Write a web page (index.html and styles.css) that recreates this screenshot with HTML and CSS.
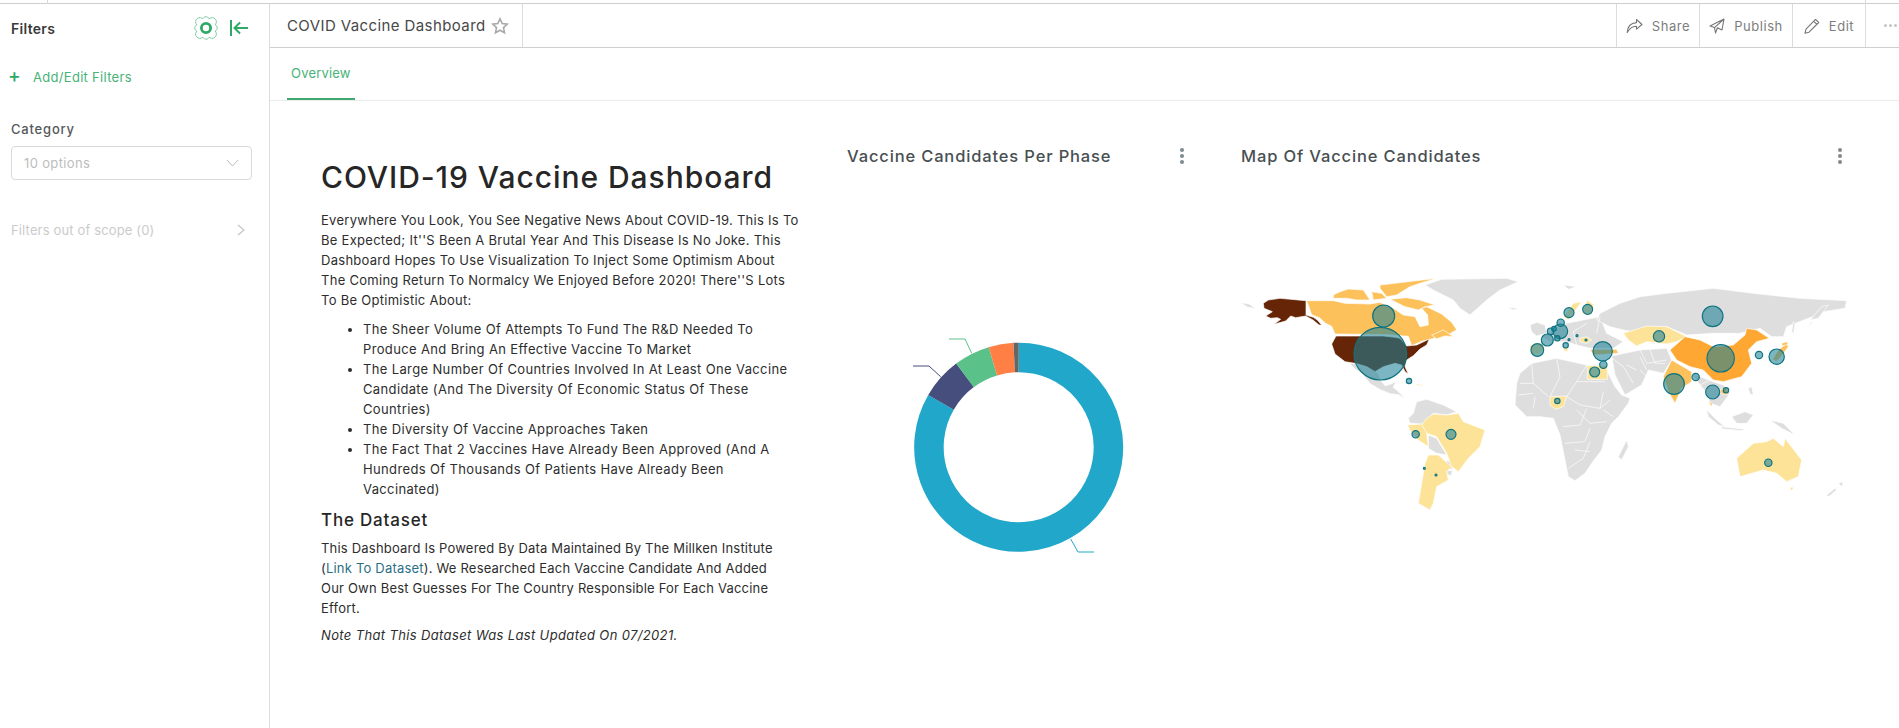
FILE: index.html
```html
<!doctype html>
<html lang="en">
    <head>
        <meta charset="utf-8">
        <title>COVID Vaccine Dashboard</title>
        <link rel="stylesheet" href="styles.css">
    </head>
    <body>
        <div class="top-strip"><span class="top-tick"></span><span class="top-tick top-tick-right"></span></div>

        <div class="layout">

            <aside class="filter-bar">
                <div class="filter-head">
                    <span class="filter-title">Filters</span>
                    <svg class="filter-gear" width="24" height="24" viewBox="0 0 24 24" fill="none" stroke="#2ea866">
                        <path stroke-width=".8" stroke-dasharray="1.3 .4" d="M15.2 2.9A3.5 3.5 0 0 1 21.1 8.8A3.5 3.5 0 0 1 21.1 15.2A3.5 3.5 0 0 1 15.2 21.1A3.5 3.5 0 0 1 8.8 21.1A3.5 3.5 0 0 1 2.9 15.2A3.5 3.5 0 0 1 2.9 8.8A3.5 3.5 0 0 1 8.8 2.9A3.5 3.5 0 0 1 15.2 2.9z"/>
                        <circle cx="12" cy="12" r="4.6" stroke-width="2.8"/>
                    </svg>
                    <svg class="filter-collapse" width="20" height="18" viewBox="0 0 20 18" fill="none" stroke="#2ea866" stroke-width="2">
                        <path d="M2 1v16"/>
                        <path d="M19 9H6M11 3.5L5.5 9l5.5 5.5"/>
                    </svg>
                </div>

                <a class="filter-add"><span class="filter-plus">+</span>Add/Edit Filters</a>

                <div class="filter-group">
                    <label class="filter-label">Category</label>
                    <div class="filter-select">
                        <span>10 options</span>
                        <svg width="13" height="8" viewBox="0 0 13 8" fill="none" stroke="#bdbdbd" stroke-width="1"><path d="M1 1l5.5 6L12 1"/></svg>
                    </div>
                </div>

                <div class="filter-scope">
                    <span>Filters out of scope (0)</span>
                    <svg width="8" height="12" viewBox="0 0 8 12" fill="none" stroke="#c4c4c4" stroke-width="1.2"><path d="M1 1l6 5-6 5"/></svg>
                </div>
            </aside>

            <main class="dash">
                <header class="dash-head">
                    <div class="dash-name">
                        <span>COVID Vaccine Dashboard</span>
                        <svg width="18" height="18" viewBox="0 0 18 18" fill="none" stroke="#a8a8a8" stroke-width="1.6"><path d="M9 1.8l2.2 4.7 5.1.6-3.8 3.5 1 5.1L9 13.2l-4.5 2.5 1-5.1-3.8-3.5 5.1-.6z"/></svg>
                    </div>
                    <div class="dash-actions">
                        <a class="action action-share">
                            <svg width="17" height="16" viewBox="0 0 17 16" fill="none" stroke="#777" stroke-width="1.1" stroke-linejoin="round"><path d="M10.5 1.5L16 6.5l-5.5 4.6V8.2C6.5 8 3.5 10 1.2 14.5 1.5 9 4.5 5 10.5 4.6z"/></svg>
                            Share
                        </a>
                        <a class="action action-publish">
                            <svg width="16" height="16" viewBox="0 0 16 16" fill="none" stroke="#777" stroke-width="1.1" stroke-linejoin="round"><path d="M15 1L1 8l4.5 1.6L15 1l-2 11-4.6-2.2L6.5 15l-1-5.4"/></svg>
                            Publish
                        </a>
                        <a class="action action-edit">
                            <svg width="16" height="16" viewBox="0 0 16 16" fill="none" stroke="#777" stroke-width="1.1" stroke-linejoin="round"><path d="M11.5 1.3l3.2 3.2L5 14.2l-4 1 1-4zM9.6 3.2l3.2 3.2"/></svg>
                            Edit
                        </a>
                        <a class="action action-more"><i></i><i></i><i></i></a>
                    </div>
                </header>

                <nav class="tabs">
                    <a class="tab active">Overview</a>
                </nav>

                <div class="dash-grid">

                    <section class="note">
                        <h1>COVID-19 Vaccine Dashboard</h1>
                        <p class="note-intro">Everywhere You Look, You See Negative News About COVID-19. This Is To<br>
                        Be Expected; It''S Been A Brutal Year And This Disease Is No Joke. This<br>
                        Dashboard Hopes To Use Visualization To Inject Some Optimism About<br>
                        The Coming Return To Normalcy We Enjoyed Before 2020! There''S Lots<br>
                        To Be Optimistic About:</p>
                        <ul>
                            <li>The Sheer Volume Of Attempts To Fund The R&amp;D Needed To<br>
                            Produce And Bring An Effective Vaccine To Market</li>
                            <li>The Large Number Of Countries Involved In At Least One Vaccine<br>
                            Candidate (And The Diversity Of Economic Status Of These<br>
                            Countries)</li>
                            <li>The Diversity Of Vaccine Approaches Taken</li>
                            <li>The Fact That 2 Vaccines Have Already Been Approved (And A<br>
                            Hundreds Of Thousands Of Patients Have Already Been<br>
                            Vaccinated)</li>
                        </ul>
                        <h2>The Dataset</h2>
                        <p class="note-data">This Dashboard Is Powered By Data Maintained By The Millken Institute<br>
                        (<a class="note-link">Link To Dataset</a>). We Researched Each Vaccine Candidate And Added<br>
                        Our Own Best Guesses For The Country Responsible For Each Vaccine<br>
                        Effort.</p>
                        <p class="note-small"><em>Note That This Dataset Was Last Updated On 07/2021.</em></p>
                    </section>

                    <section class="chart chart-donut">
                        <div class="chart-head">
                            <h3>Vaccine Candidates Per Phase</h3>
                            <span class="kebab"><i></i><i></i><i></i></span>
                        </div>
                        <svg class="donut" width="260" height="240" viewBox="880 320 260 240" fill="none" stroke-width="1">
                            <path stroke="#20a7c9" d="M1070.7 539l7.3 13h16"/>
                            <path stroke="#454e7c" d="M940.7 376.7L929 366h-16"/>
                            <path stroke="#5ac189" d="M971.7 353.3L965 339h-16"/>
                            <g stroke-width="29.5">
                                <path stroke="#20a7c9" d="M1018.7 357.5A89.75 89.75 0 1 1 941.0 402.3"/>
                                <path stroke="#454e7c" d="M941.0 402.3A89.75 89.75 0 0 1 965.0 375.3"/>
                                <path stroke="#5ac189" d="M965.0 375.3A89.75 89.75 0 0 1 992.9 361.3"/>
                                <path stroke="#ff7f44" d="M992.9 361.3A89.75 89.75 0 0 1 1014.2 357.6"/>
                                <path stroke="#666666" d="M1014.2 357.6A89.75 89.75 0 0 1 1018.7 357.5"/>
                            </g>
                        </svg>
                    </section>

                    <section class="chart chart-map">
                        <div class="chart-head">
                            <h3>Map Of Vaccine Candidates</h3>
                            <span class="kebab"><i></i><i></i><i></i></span>
                        </div>
                        <svg class="world" width="640" height="270" viewBox="0 0 1920 810">
                            <g class="land-none">
                                <!-- greenland, russia tip, iceland -->
                                <path d="M585 45l50-17 195-3 35 10-55 25-40 30-50 45-30-20-20-25-60-30z"/>
                                <path d="M32 98l25 4 20 14-25-5z"/>
                                <path d="M830 112l35 3-15 5z"/>
                                <!-- mexico and central america -->
                                <path d="M358 280l27 2 35 13 25 15 8 22 12 15 18-5 15-8-8 18 14 12 22 22-20-12-25-3-30-12-30-18-25-30-22-15z"/>
                                <!-- north of south america -->
                                <path d="M535 445l15-15 10-35 30-7 50 17 40 20-30 10-40-5-20 20-15 12-35-2z"/>
                                <path d="M595 495l25 10 30 50-30-5-25-15z"/>
                                <path d="M650 570l20 12-5 18-15-8z"/>
                                <path d="M650 602h18l-5 15-12-4z"/>
                            </g>
                            <g class="land-mid">
                                <path d="M230 92h80l35 8 75 2 30-5 20 10 20 8 30 20 35 5 15 30 25-5-2-30-18-20 15-5 45 22 30 25 15 22-25 15-40 10-40 10-30 13-10-28-60-5-160-2-10-23-20-10-15-15-25-10z"/>
                                <path d="M450 45l170-20-50 15-30 10-40 25-30 5-20-25z"/>
                                <path d="M310 75l20-10 25-8 45 3 20 30h-40l-30-5-40 0z"/>
                                <path d="M425 65l30 5 15 15-40 5z"/>
                                <path d="M480 88l50-5 40 7 45 15-30 5-20 10-40-10z"/>
                                <path d="M605 195l35-15 30 20-25-2-25 8z"/>
                            </g>
                            <g class="land-top">
                                <path d="M100 100l15-10 35-5 78 7v43l22 7 12 8 13 15-8 0-18-15-22-12-30 5-15-5-15 15-35 10 20-15-10-5-20 2-15-7 20-13-25-10z"/>
                                <path d="M318 198h142l35 4 15 3 20 23 30-3 38-18-8 18-20 12-20 20-20 13-5 20 10 22-10-7-10-20-20-5-35 10-25 15-25-15-35-10-30-5-30-23-10-30z"/>
                            </g>
                            <g class="land-low">
                                <path d="M590 445l20-13 40 3 35-5 15 25 65 25-15 50-35 35-30 40-20-15-15-40-30-50-30-10-20-20z"/>
                                <path d="M532 465l43-3 15 28 5 40-30-20-20-20z"/>
                                <path d="M595 555h30l40 35-15 15 5 25-35 20-10 50-10 20-35-20 10-60 10-60z"/>
                                <path d="M558 340l20 6 8 3-25-3z"/>
                            </g>

                            <g transform="translate(810 0)">
                                <g class="land-none">
                                    <!-- africa -->
                                    <path d="M50 340l10-30 35-30 75-15 90 20 60 15 25 50 20 25 25 10-5 15-30 40-20 20-20 40-10 40-30 40-20 30-30 22-20-12-15-75-10-50-20-50-40-5-40 0-35-35z"/>
                                    <path d="M380 510l5 20-20 40-10-10z"/>
                                    <!-- europe -->
                                    <path d="M125 200l75-40 50-10 50-10 20 50 50 25-30 20h-70l-40-10-30-10h-50z"/>
                                    <path d="M90 165l20-8 25 8 5 25-30 8-15-12z"/>
                                    <path d="M190 45l40 5-25 8z"/>
                                    <!-- russia -->
                                    <path d="M300 130l60-30 60-20 80-10 140-15 120 15 140 15 140 7-5 23-65 10-40 35-5 15 25-40-90 35-10 30h-35l-35-25-60 15h-80l-80 5-60-25-100 15-30-5-40-10-40-20z"/>
                                    <path d="M930 150l35-40 20-5-30 40z"/>
                                    <!-- middle east, central asia -->
                                    <path d="M335 258l85-18 80-5 15 35-25 40-45-10-20 45-50 30-30-60-5-30z"/>
                                    <!-- south east asia -->
                                    <path d="M575 310l65 25 30 10 20 25-30 40-30-10-10-30-20-25z"/>
                                    <path d="M620 420l30 30 25 20-20-5-30-25z"/>
                                    <path d="M665 470l70 8-10 4-60-6z"/>
                                    <path d="M695 440l40-15 25 10-20 25-30 0z"/>
                                    <path d="M810 450l40 10 35 35-40-20z"/>
                                    <path d="M745 355l10-5 5 25-10-3z"/>
                                    <!-- new zealand -->
                                    <path d="M980 675l25-20 5 5-25 20z"/>
                                    <path d="M1015 640l15-5-5 15z"/>
                                    <path d="M875 185l5-30 5 5-4 30z"/>
                                </g>
                                <g class="land-low">
                                    <path d="M370 190l70-22 60 2 60 30-30 15-30 7-60-7-30 13-25-18z"/>
                                    <path d="M262 287h60v41h-60z"/>
                                    <path d="M150 380l50-2-10 32-25 8-15-13z"/>
                                    <path d="M710 565l50-45 40-5 20-10 30 25 5-25 50 65-10 50-35 15-30-25-40-10-70 20z"/>
                                    <path d="M868 652h14l-7 10z"/>
                                    <path d="M190 140l30-40 25-5-40 55z"/>
                                    <path d="M245 130l17-40 20 15-7 30z"/>
                                    <path d="M240 205l20-5 15 10-15 10-20-5z"/>
                                    <path d="M90 225l35-5 10 15-20 20-25-5z"/>
                                    <path d="M190 230l15 5-3 10-12-5z"/>
                                </g>
                                <g class="land-mid">
                                    <path d="M270 238h80l5 12-75 5z"/>
                                    <path d="M490 320l25-50 60 35v30l-30 20-20 45-20-35z"/>
                                    <path d="M835 240l25-20 5 10-22 30-15 15-10-8z"/>
                                    <path d="M845 220l15-5 5 8-18 5z"/>
                                    <path d="M625 395l12 5-2 10z"/>
                                    <path d="M660 360l20-8 5 22-20-2z"/>
                                </g>
                                <g class="land-high">
                                    <path d="M510 240l45-40 45 10 40 20 60-5 35-30 5-20 30 5 38 25-38 10-25 25 10 40-30 40-55 15-30-5-30-30-40-10-40-20z"/>
                                </g>
                                <path class="land-lines" d="M95 280l5 60 45 40M170 265l10 55-30 60M260 285l-30 50-30 45M230 335h85M200 380l40 25 60 10 30-25M190 470l50-5 20-50M195 520l60-5 15-40M205 595l45-30 20-50M60 340h40M55 375l45-5M100 415l5-35M230 420l40 40M270 460l50-5M300 415l10-50M225 540l45 5M340 440l-30-20M400 340l-30-50-40-30M440 300l-20-40M420 240l20 40 60-10M420 300l25 25M380 285l30 15M600 345l30-15M230 225l-10-40 40-25M300 140l-10 50M150 215l20-40M450 240l15 40 30 0"/>
                            </g>

                            <g class="bubbles">
                                <circle cx="461" cy="138" r="33"/>
                                <circle cx="451" cy="251" r="79"/>
                                <circle cx="537" cy="333" r="8"/>
                                <circle cx="557" cy="493" r="11"/>
                                <circle cx="663" cy="493" r="15"/>
                                <circle cx="583" cy="595" r="3"/>
                                <circle cx="618" cy="615" r="3"/>
                            </g>
                            <g class="bubbles" transform="translate(810 0)">
                                <circle cx="638" cy="139" r="31"/>
                                <circle cx="662" cy="265" r="41"/>
                                <circle cx="522" cy="342" r="31"/>
                                <circle cx="308" cy="244" r="29"/>
                                <circle cx="310" cy="284" r="11"/>
                                <circle cx="284" cy="306" r="15"/>
                                <circle cx="172" cy="393" r="8"/>
                                <circle cx="477" cy="199" r="17"/>
                                <circle cx="207" cy="128" r="15"/>
                                <circle cx="263" cy="118" r="15"/>
                                <circle cx="181" cy="184" r="22"/>
                                <circle cx="182" cy="158" r="11"/>
                                <circle cx="152" cy="184" r="10"/>
                                <circle cx="162" cy="176" r="7"/>
                                <circle cx="142" cy="210" r="18"/>
                                <circle cx="112" cy="240" r="19"/>
                                <circle cx="172" cy="205" r="8"/>
                                <circle cx="197" cy="226" r="8"/>
                                <circle cx="207" cy="209" r="3"/>
                                <circle cx="231" cy="197" r="3"/>
                                <circle cx="258" cy="210" r="3"/>
                                <circle cx="587" cy="321" r="11"/>
                                <circle cx="638" cy="366" r="21"/>
                                <circle cx="678" cy="361" r="8"/>
                                <circle cx="777" cy="255" r="11"/>
                                <circle cx="830" cy="260" r="23"/>
                                <circle cx="805" cy="578" r="11"/>
                            </g>
                        </svg>
                    </section>

                </div>
            </main>
        </div>
    </body>
</html>
```

FILE: styles.css
```css
* {
    box-sizing: border-box;
}

html,
body {
    height: 100%;
}

body {
    margin: 0;
    background: #fff;
    color: #323232;
    font-family: Inter, "Liberation Sans", sans-serif;
    font-size: 13px;
    overflow: hidden;
}

a {
    color: inherit;
    text-decoration: none;
}

.top-strip {
    position: relative;
    height: 4px;
    border-bottom: 1px solid #cfcfcf;
}

.top-tick {
    position: absolute;
    left: 47px;
    top: 0;
    height: 4px;
    border-left: 1px solid #d9d9d9;
}

.top-tick-right {
    left: 1865px;
}

.layout {
    display: flex;
    height: 724px;
}

/* Filter bar */

.filter-bar {
    flex: 0 0 270px;
    border-right: 1px solid #dcdcdc;
    padding: 0 11px;
}

.filter-head {
    display: flex;
    align-items: center;
    height: 48px;
}

.filter-title {
    flex: 1;
    font-size: 14px;
    font-weight: 600;
    letter-spacing: .3px;
    color: #3a3a3a;
}

.filter-gear {
    margin-right: 11px;
}

.filter-collapse {
    margin-right: 9px;
}

.filter-add {
    display: block;
    margin-top: 15px;
    color: #47b377;
    font-size: 13px;
    letter-spacing: .3px;
    line-height: 20px;
}

.filter-plus {
    display: inline-block;
    width: 25px;
    margin-left: -3px;
    font-size: 19px;
    font-weight: 500;
    line-height: 18px;
    color: #2ea866;
    vertical-align: top;
}

.filter-group {
    margin-top: 32px;
}

.filter-label {
    display: block;
    font-size: 13px;
    font-weight: 500;
    letter-spacing: .8px;
    color: #55595c;
    line-height: 20px;
}

.filter-select {
    display: flex;
    align-items: center;
    justify-content: space-between;
    width: 241px;
    height: 34px;
    margin-top: 7px;
    padding: 0 12px 0 12px;
    border: 1px solid #d9d9d9;
    border-radius: 4px;
    color: #bdbdbd;
    letter-spacing: .35px;
}

.filter-scope {
    display: flex;
    align-items: center;
    justify-content: space-between;
    width: 234px;
    margin-top: 40px;
    color: #cbcbcb;
    letter-spacing: .15px;
    line-height: 20px;
}

/* Dashboard header */

.dash {
    flex: 1;
    min-width: 0;
}

.dash-head {
    display: flex;
    justify-content: space-between;
    height: 44px;
    border-bottom: 1px solid #cfcfcf;
}

.dash-name {
    display: flex;
    align-items: center;
    gap: 5px;
    padding: 0 13px 0 17px;
    border-right: 1px solid #dcdcdc;
    font-size: 15px;
    letter-spacing: .4px;
    color: #484848;
}

.dash-actions {
    display: flex;
}

.action {
    display: flex;
    align-items: center;
    justify-content: center;
    gap: 9px;
    border-left: 1px solid #dcdcdc;
    color: #7d7d7d;
    letter-spacing: .55px;
}

.action-share {
    width: 83px;
}

.action-publish {
    width: 93px;
}

.action-edit {
    width: 73px;
}

.action-more {
    justify-content: flex-start;
    gap: 2px;
    width: 34px;
    padding-left: 18px;
}

.action-more i {
    width: 3px;
    height: 3px;
    flex: none;
    border-radius: 50%;
    background: #c4c4c4;
}

.tabs {
    display: flex;
    height: 53px;
    padding-left: 17px;
    border-bottom: 1px solid #ececec;
}

.tab {
    height: 52px;
    padding: 15px 4px 0;
    line-height: 20px;
    color: #47b377;
    letter-spacing: .2px;
}

.tab.active {
    border-bottom: 2px solid #3ea86e;
}

/* Dashboard rows */

.dash-grid {
    display: flex;
    padding-top: 44px;
}

.note {
    flex: 0 0 577px;
    padding: 14px 30px 0 51px;
    color: #2d2d2d;
    letter-spacing: .36px;
    line-height: 20px;
    white-space: nowrap;
}

.note h1 {
    margin: 0 0 15px;
    font-size: 30px;
    font-weight: 500;
    line-height: 36px;
    letter-spacing: .95px;
    color: #262626;
}

.note p {
    margin: 0;
}

.note .note-intro {
    letter-spacing: .28px;
}

.note .note-data {
    letter-spacing: .2px;
}

.note ul {
    margin: 9px 0 8px;
    padding-left: 42px;
}

.note h2 {
    margin: 0 0 5px;
    font-size: 17px;
    font-weight: 500;
    line-height: 26px;
    letter-spacing: .8px;
    color: #262626;
}

.note-link {
    color: #2a6f86;
}

.note .note-small {
    padding-top: 7px;
}

/* Charts */

.chart-head {
    display: flex;
    align-items: center;
    justify-content: space-between;
    height: 20px;
    margin-top: 1px;
}

.chart-head h3 {
    margin: 0;
    font-size: 16.5px;
    font-weight: 500;
    letter-spacing: .85px;
    color: #484f52;
}

.kebab {
    display: flex;
    flex-direction: column;
    gap: 2px;
}

.kebab i {
    width: 4px;
    height: 4px;
    border-radius: 50%;
    background: #7f8a8f;
}

.chart-donut {
    flex: 0 0 394px;
}

.chart-donut .chart-head {
    width: 337px;
}

.donut {
    display: block;
    margin: 154px 0 0 33px;
}

.chart-map {
    flex: 1;
}

.chart-map .chart-head {
    width: 601px;
}

.world {
    display: block;
    margin: 104px 0 0 -11px;
}

.world path {
    stroke: #fff;
    stroke-width: 2;
    stroke-linejoin: round;
}

.land-none path {
    fill: #dedede;
}

.land-low path {
    fill: #fde398;
}

.land-mid path {
    fill: #fdc15c;
}

.land-high path {
    fill: #fea733;
}

.land-top path {
    fill: #662506;
}

.world .land-lines {
    fill: none;
}

.bubbles circle {
    fill: rgb(28, 130, 150);
    fill-opacity: .58;
    stroke: #0f7380;
    stroke-width: 3.5;
}
```
